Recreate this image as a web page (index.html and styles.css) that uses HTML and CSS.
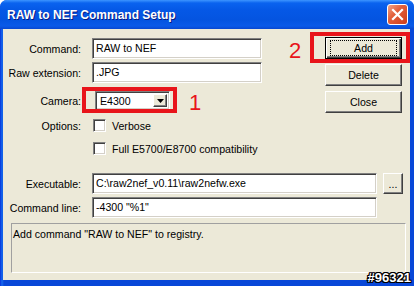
FILE: index.html
```
<!DOCTYPE html>
<html lang="en">
  <head>
    <meta charset="UTF-8" />
    <title>RAW to NEF Command Setup</title>
    <link rel="stylesheet" href="styles.css">
  </head>
  <body>
    <div class="window">
      <div class="titlebar">
        <span class="title">RAW to NEF Command Setup</span>
        <span class="close-x">
          <svg width="13" height="13" viewBox="0 0 13 13">
            <path d="M2 2 L11 11 M11 2 L2 11" stroke="#fff" stroke-width="2.2" stroke-linecap="square" />
          </svg>
        </span>
      </div>

      <div class="client">
        <div class="upper">
          <div class="fields">
            <div class="row">
              <span class="lbl">Command:</span>
              <div class="field short">RAW to NEF</div>
            </div>
            <div class="row">
              <span class="lbl">Raw extension:</span>
              <div class="field short">.JPG</div>
            </div>
            <div class="row camera-row">
              <span class="lbl">Camera:</span>
              <div class="combo">
                <span class="combo-text">E4300</span>
                <span class="drop">
                  <svg width="7" height="4" viewBox="0 0 7 4"><path d="M0 0 H7 L3.5 4 Z" fill="#000" /></svg>
                </span>
              </div>
            </div>
            <div class="row check-row">
              <span class="lbl">Options:</span>
              <span class="check"><span class="box"></span>Verbose</span>
            </div>
            <div class="row check-row second">
              <span class="lbl"></span>
              <span class="check"><span class="box"></span>Full E5700/E8700 compatibility</span>
            </div>
          </div>

          <div class="buttons">
            <div class="btn default"><span class="focus">Add</span></div>
            <div class="btn">Delete</div>
            <div class="btn">Close</div>
          </div>
        </div>

        <div class="paths">
          <div class="row">
            <span class="lbl">Executable:</span>
            <div class="field long">C:\raw2nef_v0.11\raw2nefw.exe</div>
            <div class="btn browse">...</div>
          </div>
          <div class="row">
            <span class="lbl">Command line:</span>
            <div class="field long">-4300 "%1"</div>
          </div>
        </div>

        <div class="status">Add command "RAW to NEF" to registry.</div>

        <!-- annotations drawn over the dialog -->
        <span class="mark-box camera-mark"></span>
        <span class="mark-num num-1">1</span>
        <span class="mark-box add-mark"></span>
        <span class="mark-num num-2">2</span>
      </div>

      <span class="watermark">#96321</span>
    </div>
  </body>
</html>
```

FILE: styles.css
```
body {
  margin: 0;
  background: #fff;
  font-family: "Liberation Sans", Arial, sans-serif;
  font-size: 10.6px;
  color: #000;
}

.window {
  position: relative;
  width: 414px;
  height: 286px;
  display: flex;
  flex-direction: column;
  background: linear-gradient(90deg, #0831d9 0, #166aee 2px, #0847d8 4px);
  border-radius: 7px 7px 0 0;
  overflow: hidden;
}

.titlebar {
  height: 29px;
  flex: none;
  display: flex;
  align-items: center;
  justify-content: space-between;
  padding: 0 6px 0 7px;
  background: linear-gradient(#3d95ff 0, #0a63ef 3px, #0558e6 10px, #0454e0 20px, #0a5ae8 26px, #0847d0 29px);
}

.title {
  color: #fff;
  font-weight: bold;
  font-size: 12px;
  text-shadow: 1px 1px #0a1a80;
  padding-top: 1px;
}

.close-x {
  width: 21px;
  height: 21px;
  box-sizing: border-box;
  border: 1px solid #fff;
  border-radius: 3px;
  background: linear-gradient(135deg, #f0a488 0, #e2603c 40%, #cc3d1a 100%);
  display: flex;
  align-items: center;
  justify-content: center;
}

.client {
  position: relative;
  flex: 1;
  margin: 0 4px 6px 3px;
  background: #ece9d8;
}

.upper {
  display: flex;
  justify-content: space-between;
}

.fields {
  padding-top: 9px;
}

.row {
  display: flex;
  align-items: center;
  margin-bottom: 3px;
}

.lbl {
  width: 78px;
  margin-right: 11px;
  text-align: right;
  flex: none;
}

.field {
  height: 21px;
  box-sizing: border-box;
  background: #fff;
  border: 1px solid;
  border-color: #808080 #fff #fff #808080;
  box-shadow: inset 1px 1px #404040, inset -1px -1px #d4d0c8;
  padding: 3px 0 0 3px;
  white-space: nowrap;
}

.short {
  width: 170px;
}

.long {
  width: 285px;
}

.camera-row {
  margin-top: 8px;
}

.combo {
  margin-left: 3px;
  width: 75px;
  height: 19px;
  box-sizing: border-box;
  background: #fff;
  border: 1px solid;
  border-color: #808080 #fff #fff #808080;
  box-shadow: inset 1px 1px #404040, inset -1px -1px #d4d0c8;
  display: flex;
  align-items: center;
  justify-content: space-between;
  padding: 0 2px 0 4px;
}

.drop {
  width: 14px;
  height: 13px;
  box-sizing: border-box;
  background: #ece9d8;
  border: 1px solid;
  border-color: #fff #404040 #404040 #fff;
  box-shadow: inset -1px -1px #808080;
  display: flex;
  align-items: center;
  justify-content: center;
}

.check-row {
  margin-top: 9px;
  height: 13px;
}

.check-row.second {
  margin-top: 10px;
}

.check {
  display: flex;
  align-items: center;
  margin-left: 1px;
}

.box {
  width: 13px;
  height: 13px;
  box-sizing: border-box;
  background: #fff;
  border: 1px solid;
  border-color: #808080 #fff #fff #808080;
  box-shadow: inset 1px 1px #404040, inset -1px -1px #d4d0c8;
  margin-right: 6px;
}

.buttons {
  display: flex;
  flex-direction: column;
  gap: 5px;
  padding: 8px 8px 0 0;
}

.btn {
  width: 77px;
  height: 22px;
  box-sizing: border-box;
  background: #ece9d8;
  border: 1px solid;
  border-color: #fff #404040 #404040 #fff;
  box-shadow: inset -1px -1px #808080;
  display: flex;
  align-items: center;
  justify-content: center;
}

.btn.default {
  border-color: #000;
  box-shadow: inset 1px 1px #fff, inset -1px -1px #404040, inset -2px -2px #808080;
}

.focus {
  width: 65px;
  height: 14px;
  border: 1px dotted #000;
  display: flex;
  align-items: center;
  justify-content: center;
}

.paths {
  margin-top: 15px;
}

.browse {
  width: 20px;
  height: 21px;
  margin-left: 6px;
}

.status {
  margin: 5px 4px 0 8px;
  height: 50px;
  box-sizing: border-box;
  border: 1px solid;
  border-color: #a0a0a0 #fff #fff #a0a0a0;
  padding: 4px 0 0 1px;
}

.mark-box {
  position: absolute;
  border: 4px solid #e8141a;
}

.camera-mark {
  left: 79px;
  top: 58px;
  width: 87px;
  height: 18px;
}

.add-mark {
  left: 307px;
  top: 3px;
  width: 92px;
  height: 23px;
}

.mark-num {
  position: absolute;
  color: #e8141a;
  font-size: 22px;
}

.num-1 {
  left: 186px;
  top: 61px;
}

.num-2 {
  left: 286px;
  top: 9px;
}

.watermark {
  position: absolute;
  right: 3px;
  bottom: 1px;
  color: #fff;
  font-weight: bold;
  font-size: 13px;
  text-shadow: 1px 0 #000, -1px 0 #000, 0 1px #000, 0 -1px #000, 1px 1px #000, -1px -1px #000, 1px -1px #000, -1px 1px #000;
}
```
